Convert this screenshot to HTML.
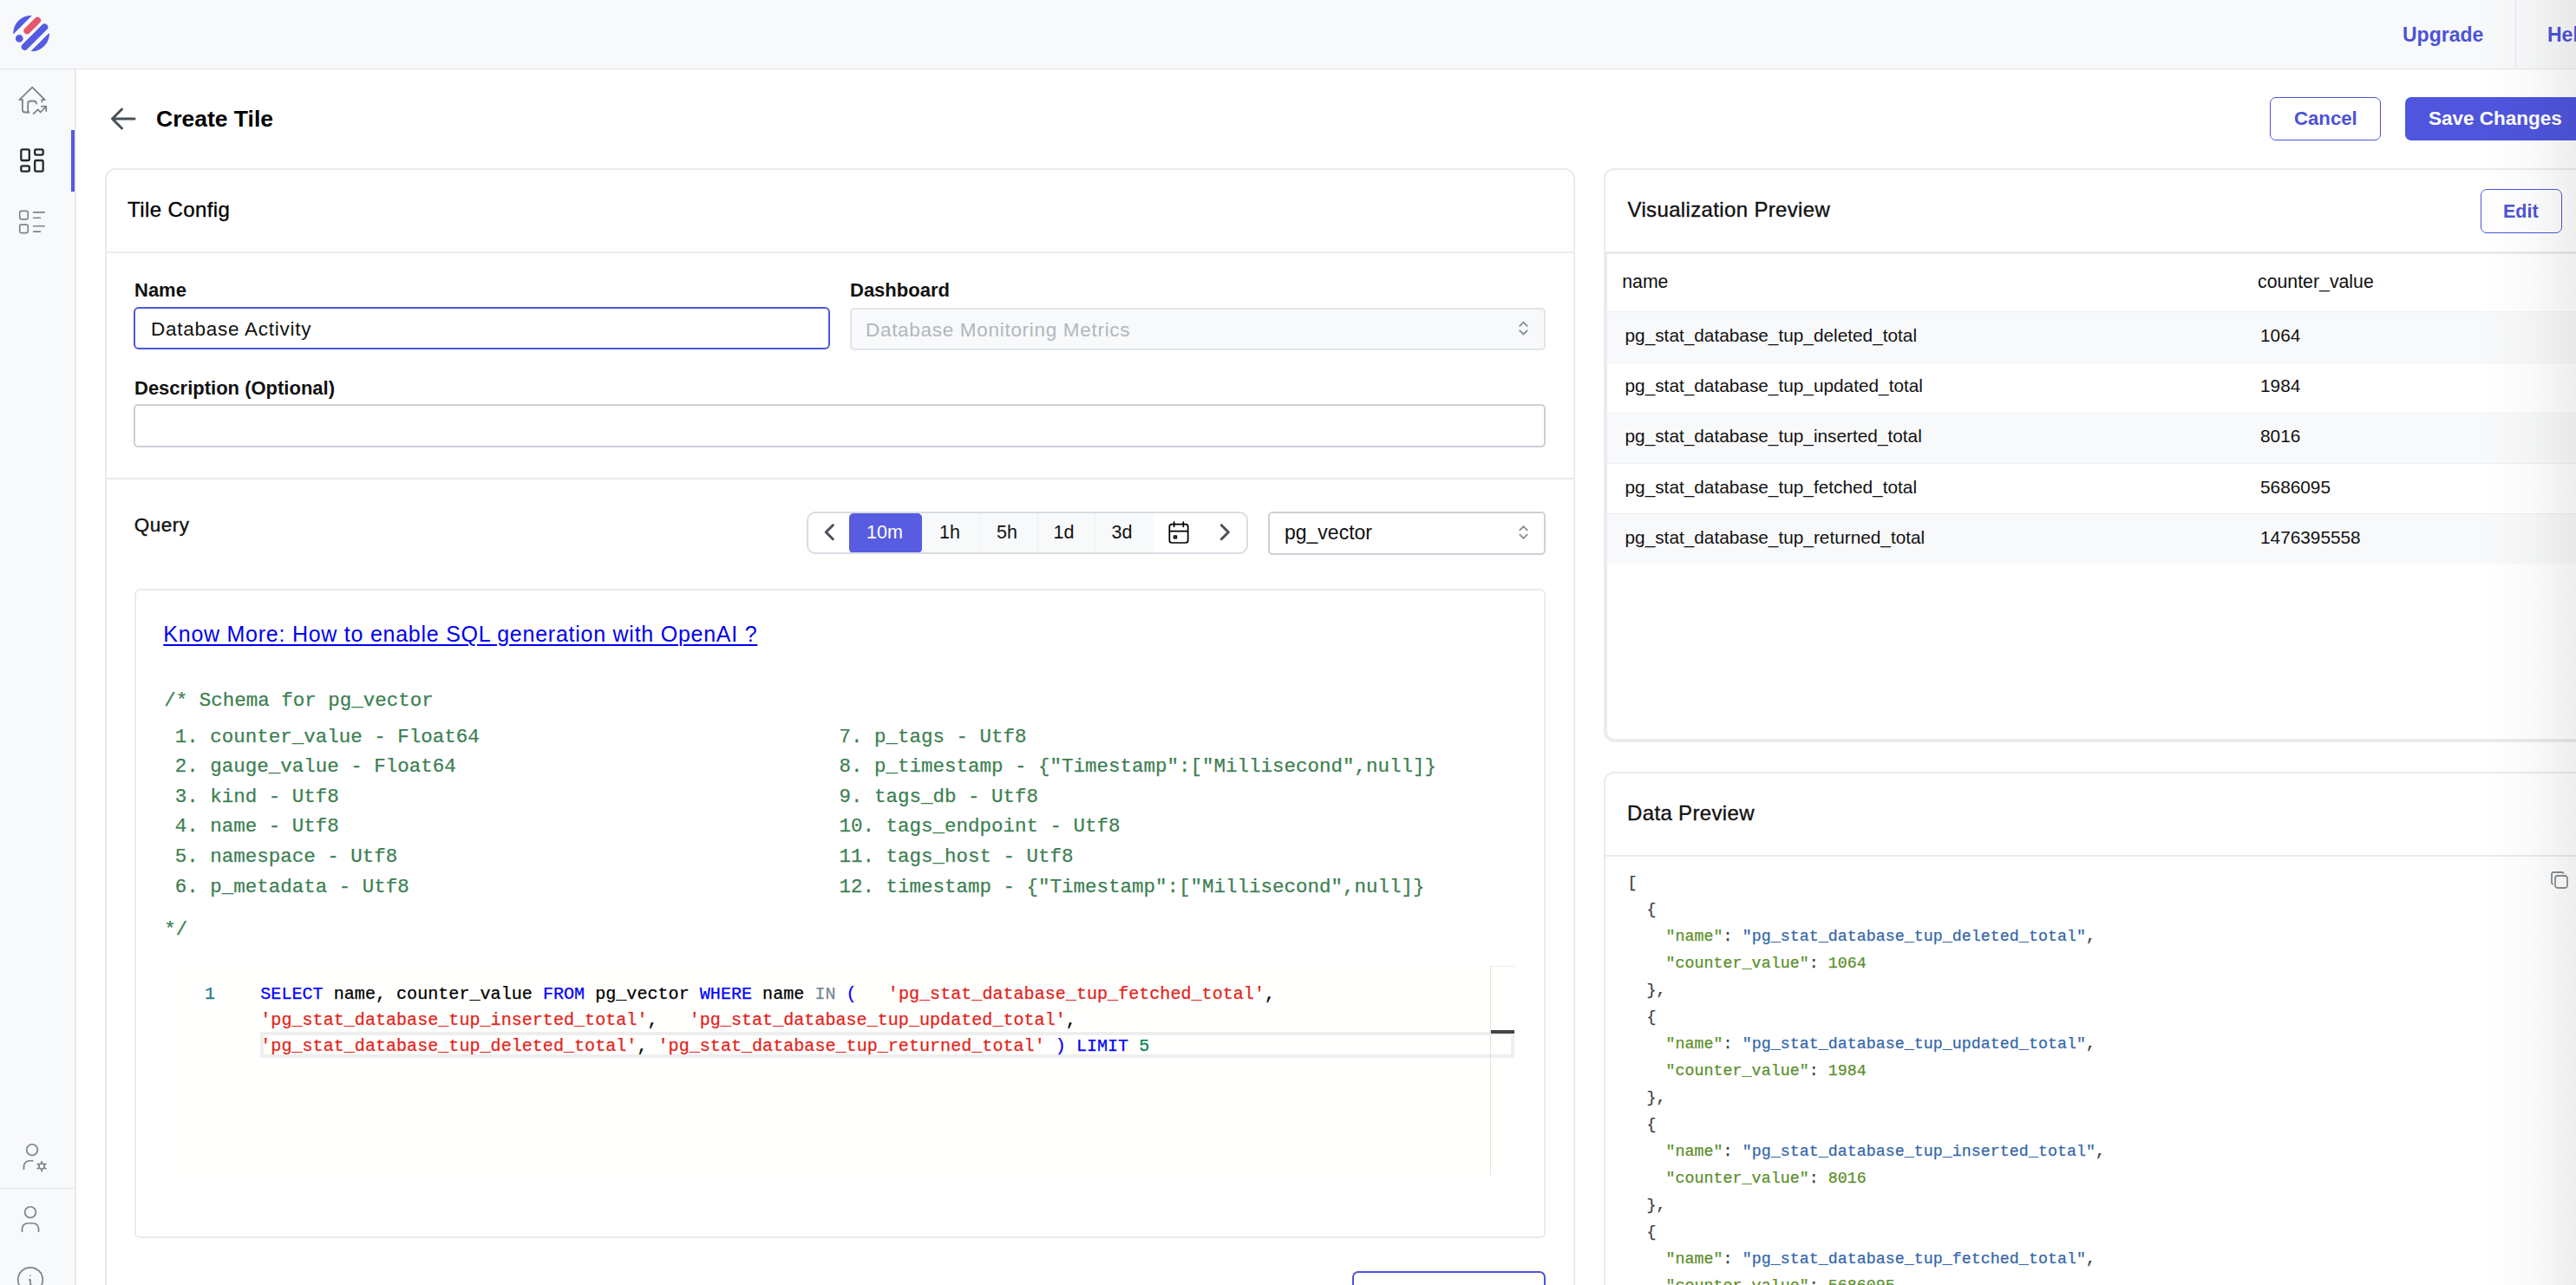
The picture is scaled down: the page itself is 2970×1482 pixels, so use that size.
<!DOCTYPE html>
<html><head><meta charset="utf-8">
<style>
*{box-sizing:border-box;margin:0;padding:0}
html,body{width:2970px;height:1482px;overflow:hidden;background:#fff;font-family:"Liberation Sans",sans-serif;color:#000}
.a{position:absolute}
.t{position:absolute;white-space:pre;line-height:1}
.m{font-family:"Liberation Mono",monospace;-webkit-text-stroke:0.25px currentColor}
.b{font-weight:700}
svg{position:absolute;overflow:visible}
#hdr{left:0;top:0;width:2970px;height:80px;background:#f8f9fa;border-bottom:1px solid #e3e6ea}
#side{left:0;top:80px;width:88px;height:1402px;background:#f8f9fa;border-right:2px solid #e8eaee}
.card{position:absolute;border:2px solid #e9ebef;border-radius:12px;background:#fff}
.hl{position:absolute;height:2px;background:#e9ebef}
.md{-webkit-text-stroke:0.35px currentColor}
.ic{fill:none;stroke-linecap:round;stroke-linejoin:round}
</style></head><body>
<!-- header -->
<div id="hdr" class="a"></div>
<svg style="left:0;top:0" width="70" height="70" viewBox="0 0 70 70">
 <g transform="translate(36.1 38.5) rotate(-45)">
  <path d="M-14.3 -14.5 A20.4 20.4 0 0 1 14.3 -14.5 Z" fill="#545be2" stroke="#545be2" stroke-width="1" stroke-linejoin="round"/>
  <path d="M-14.1 14.7 A20.4 20.4 0 0 0 14.1 14.7 Z" fill="#545be2" stroke="#545be2" stroke-width="1" stroke-linejoin="round"/>
  <line x1="-1.3" y1="-5.6" x2="15.7" y2="-5.6" stroke="#e8536d" stroke-width="7.6" stroke-linecap="round"/>
  <circle cx="-14" cy="-5.6" r="4.4" fill="#545be2"/>
  <line x1="-16.3" y1="5.7" x2="15.9" y2="5.7" stroke="#545be2" stroke-width="7.8" stroke-linecap="round"/>
 </g>
</svg>
<div class="a" style="left:2900px;top:0;width:1px;height:79px;background:#e3e6ea"></div>
<div class="t b" style="left:2770px;top:28.5px;font-size:23px;color:#4c53d6">Upgrade</div>
<div class="t b" style="left:2937px;top:28.5px;font-size:23px;color:#4c53d6">Help</div>
<!-- sidebar -->
<div id="side" class="a"></div>
<div class="a" style="left:82px;top:150px;width:4px;height:71px;background:#545be2"></div>
<div class="a" style="left:0;top:1370px;width:86px;height:1px;background:#e3e6ea"></div>
<!-- home stats icon -->
<svg style="left:0;top:0" width="87" height="1482" class="ic" stroke="#7c838b" stroke-width="1.8">
 <path d="M25.9 115.1 H22.4 L37.2 100.6 L51.8 115.1 H48.3 V117.4"/>
 <path d="M25.9 115.1 V126.5 Q25.9 129.5 29 129.5 H33.6"/>
 <path d="M32.2 129.5 V119.5 Q32.2 116.5 35.3 116.5 H38.8 Q41.6 116.5 42.1 119.5"/>
 <path d="M38.6 131.2 L43.7 126.3 L46.7 129.5 L53.2 122.7 M47.9 122.7 H53.2 V128"/>
</svg>
<!-- dashboard icon -->
<svg style="left:18.1px;top:165.8px" width="38" height="38" viewBox="0 0 24 24" class="ic" stroke="#25282c" stroke-width="1.45">
 <path d="M5 4h4a1 1 0 0 1 1 1v6a1 1 0 0 1-1 1H5a1 1 0 0 1-1-1V5a1 1 0 0 1 1-1M5 16h4a1 1 0 0 1 1 1v2a1 1 0 0 1-1 1H5a1 1 0 0 1-1-1v-2a1 1 0 0 1 1-1M15 12h4a1 1 0 0 1 1 1v6a1 1 0 0 1-1 1h-4a1 1 0 0 1-1-1v-6a1 1 0 0 1 1-1M15 4h4a1 1 0 0 1 1 1v2a1 1 0 0 1-1 1h-4a1 1 0 0 1-1-1V5a1 1 0 0 1 1-1"/>
</svg>
<!-- list icon -->
<svg style="left:17.84px;top:236.66px" width="38" height="38" viewBox="0 0 24 24" class="ic" stroke="#7c838b" stroke-width="1.05">
 <path d="M13 5h8M13 9h5M13 15h8M13 19h5M4 4h4a1 1 0 0 1 1 1v4a1 1 0 0 1-1 1h-4a1 1 0 0 1-1-1v-4a1 1 0 0 1 1-1zM4 14h4a1 1 0 0 1 1 1v4a1 1 0 0 1-1 1h-4a1 1 0 0 1-1-1v-4a1 1 0 0 1 1-1z"/>
</svg>
<!-- user cog -->
<svg style="left:18.17px;top:1315.1px" width="38" height="38" viewBox="0 0 24 24" class="ic" stroke="#7c838b" stroke-width="1.1">
 <path d="M6 21v-2a4 4 0 0 1 4-4h2.5M8 7a4 4 0 1 0 8 0a4 4 0 0 0-8 0M17 19a2 2 0 1 0 4 0a2 2 0 1 0-4 0M19 15.5v1.5M19 21v1.5M22.03 17.25l-1.3.75M17.27 20l-1.3.75M15.97 17.25l1.3.75M20.73 20l1.3.75"/>
</svg>
<!-- user -->
<svg style="left:16.17px;top:1386.8px" width="38" height="38" viewBox="0 0 24 24" class="ic" stroke="#7c838b" stroke-width="1.1">
 <path d="M8 7a4 4 0 1 0 8 0a4 4 0 0 0-8 0M6 21v-2a4 4 0 0 1 4-4h4a4 4 0 0 1 4 4v2"/>
</svg>
<!-- info -->
<svg style="left:16.17px;top:1457.2px" width="38" height="38" viewBox="0 0 24 24" class="ic" stroke="#7c838b" stroke-width="1.1">
 <path d="M3 12a9 9 0 1 0 18 0a9 9 0 0 0-18 0M12 9h.01M11 12h1v4h1"/>
</svg>

<!-- title -->
<svg style="left:0;top:0" width="200" height="200" class="ic" stroke="#495057" stroke-width="3">
 <path d="M129.5 137 H155 M129.5 137 L140.5 126 M129.5 137 L140.5 148"/>
</svg>
<div class="t b" style="left:180px;top:123.7px;font-size:26.5px">Create Tile</div>
<div class="a" style="left:2617px;top:112px;width:128px;height:50px;border:1.5px solid #4c53d6;border-radius:7px"></div>
<div class="t b" style="left:2645px;top:126px;font-size:22.2px;color:#4c53d6">Cancel</div>
<div class="a" style="left:2773px;top:112px;width:260px;height:50px;background:#4f55dd;border-radius:7px"></div>
<div class="t b" style="left:2800px;top:126px;font-size:22.5px;color:#fff">Save Changes</div>

<!-- left card -->
<div class="card" style="left:121px;top:194px;width:1695px;height:1400px"></div>
<div class="t md" style="left:147px;top:229.5px;font-size:24px;letter-spacing:0.4px">Tile Config</div>
<div class="hl" style="left:123px;top:290px;width:1691px"></div>

<div class="t b" style="left:155px;top:324.4px;font-size:22px;color:#111">Name</div>
<div class="a" style="left:154px;top:354px;width:803px;height:49px;border:2px solid #4c57dc;border-radius:6px"></div>
<div class="t" style="left:174px;top:368.7px;font-size:22.5px;letter-spacing:0.74px;color:#111">Database Activity</div>

<div class="t b" style="left:980px;top:324px;font-size:22px;color:#111">Dashboard</div>
<div class="a" style="left:979.5px;top:354.5px;width:802px;height:49px;background:#f8f9fa;border:2px solid #e1e4e8;border-radius:5px"></div>
<div class="t" style="left:998px;top:370px;font-size:22.5px;letter-spacing:0.7px;color:#b1b7bd">Database Monitoring Metrics</div>
<svg style="left:0;top:0" width="1" height="1" class="ic" stroke="#868e96" stroke-width="1.9">
 <path d="M1752.3 375.9 L1756.5 371.7 L1760.7 375.9 M1752.3 381.3 L1756.5 385.5 L1760.7 381.3"/>
</svg>

<div class="t b" style="left:155px;top:437.4px;font-size:22px;color:#111">Description (Optional)</div>
<div class="a" style="left:154px;top:466px;width:1628px;height:50px;border:2px solid #cbd0d6;border-radius:5px"></div>
<div class="hl" style="left:123px;top:551px;width:1691px"></div>
<!-- query section -->
<div class="t md" style="left:154.7px;top:595px;font-size:22.5px;letter-spacing:0.5px;color:#111">Query</div>
<div class="a" style="left:930px;top:590px;width:508.5px;height:49px;border:2px solid #d9dde2;border-radius:10px;background:#fff;overflow:hidden">
 <div class="a" style="left:47px;top:0;width:351px;height:46px;background:#f8f9fa"></div>
 <div class="a" style="left:47px;top:0;width:84px;height:46px;background:#585ce0;border-radius:5px"></div>
 <div class="a" style="left:196.5px;top:0;width:1px;height:46px;background:#eef0f3"></div>
 <div class="a" style="left:263.5px;top:0;width:1px;height:46px;background:#eef0f3"></div>
 <div class="a" style="left:329.5px;top:0;width:1px;height:46px;background:#eef0f3"></div>
</div>
<div class="t" style="left:999px;top:604px;font-size:21.5px;color:#fff">10m</div>
<div class="t" style="left:1083px;top:604px;font-size:21.5px;color:#111">1h</div>
<div class="t" style="left:1149px;top:604px;font-size:21.5px;color:#111">5h</div>
<div class="t" style="left:1214.5px;top:604px;font-size:21.5px;color:#111">1d</div>
<div class="t" style="left:1281.5px;top:604px;font-size:21.5px;color:#111">3d</div>
<svg style="left:1342.8px;top:597.9px" width="32" height="32" viewBox="0 0 24 24" class="ic" stroke="#000" stroke-width="1.3">
 <path d="M4 7a2 2 0 0 1 2-2h12a2 2 0 0 1 2 2v12a2 2 0 0 1-2 2h-12a2 2 0 0 1-2-2zM16 3v4M8 3v4M4 11h16M8 15h2v2h-2z"/>
</svg>
<svg style="left:0;top:0" width="1" height="1" class="ic" stroke="#495057" stroke-width="3">
 <path d="M1408.3 605.7 L1416.3 613.7 L1408.3 621.7 M960.3 605.7 L952.3 613.7 L960.3 621.7"/>
</svg>
<div class="a" style="left:1461.5px;top:589.5px;width:320.5px;height:50px;border:2px solid #ccd1d8;border-radius:5px"></div>
<div class="t" style="left:1481px;top:603px;font-size:23px;color:#111">pg_vector</div>
<svg style="left:0;top:0" width="1" height="1" class="ic" stroke="#868e96" stroke-width="1.9">
 <path d="M1752.3 611.3 L1756.5 607.1 L1760.7 611.3 M1752.3 616.7 L1756.5 620.9 L1760.7 616.7"/>
</svg>

<div class="a" style="left:154.5px;top:678.5px;width:1627px;height:749px;border:2px solid #e9ebef;border-radius:6px"></div>
<div class="t" style="left:188.3px;top:718.5px;font-size:25px;letter-spacing:0.75px;color:#0000ee;text-decoration:underline;text-decoration-thickness:2px;text-underline-offset:3px">Know More: How to enable SQL generation with OpenAI ?</div>
<div class="m" style="position:absolute;left:189.3px;top:797px;font-size:22.5px;line-height:1;white-space:pre;color:#3d7f52">/* Schema for pg_vector</div>
<div class="m" style="position:absolute;left:188.3px;top:841px;font-size:22.5px;line-height:34.6px;white-space:pre;color:#3d7f52;margin-top:-8.3px"> 1. counter_value - Float64
 2. gauge_value - Float64
 3. kind - Utf8
 4. name - Utf8
 5. namespace - Utf8
 6. p_metadata - Utf8</div>
<div class="m" style="position:absolute;left:967.5px;top:841px;font-size:22.5px;line-height:34.6px;white-space:pre;color:#3d7f52;margin-top:-8.3px">7. p_tags - Utf8
8. p_timestamp - {"Timestamp":["Millisecond",null]}
9. tags_db - Utf8
10. tags_endpoint - Utf8
11. tags_host - Utf8
12. timestamp - {"Timestamp":["Millisecond",null]}</div>
<div class="m" style="position:absolute;left:189.3px;top:1061.3px;font-size:22.5px;line-height:1;white-space:pre;color:#3d7f52">*/</div>

<div class="a" style="left:188px;top:1112px;width:1558px;height:245px;background:#fffffd"></div>
<div class="a" style="left:300px;top:1190px;width:1446px;height:30px;border:4px solid #eeeeee"></div>
<div class="a" style="left:1718px;top:1114px;width:1px;height:241px;background:#e2e2e2"></div>
<div class="a" style="left:1718px;top:1114px;width:28px;height:1px;background:#eeeeee"></div>
<div class="a" style="left:1719px;top:1187.5px;width:27px;height:4.5px;background:#444"></div>
<div class="m" style="position:absolute;left:236px;top:1136.8px;font-size:20px;line-height:1;white-space:pre;color:#237893">1</div>
<div class="m" style="position:absolute;left:300.3px;top:1131.8px;font-size:20.1px;line-height:30px;white-space:pre;color:#000"><span style="color:#0000ff">SELECT</span> name, counter_value <span style="color:#0000ff">FROM</span> pg_vector <span style="color:#0000ff">WHERE</span> name <span style="color:#778899">IN</span> <span style="color:#0000ff">(</span>   <span style="color:#e3241b">'pg_stat_database_tup_fetched_total'</span>,
<span style="color:#e3241b">'pg_stat_database_tup_inserted_total'</span>,   <span style="color:#e3241b">'pg_stat_database_tup_updated_total'</span>,
<span style="color:#e3241b">'pg_stat_database_tup_deleted_total'</span>, <span style="color:#e3241b">'pg_stat_database_tup_returned_total'</span> <span style="color:#0000ff">)</span> <span style="color:#0000ff">LIMIT</span> <span style="color:#098658">5</span></div>
<div class="a" style="left:1558.5px;top:1466px;width:223px;height:60px;border:2px solid #4c53d6;border-radius:7px"></div>

<!-- right: visualization -->
<div class="card" style="left:1849px;top:194px;width:1200px;height:662px"></div>
<div class="t md" style="left:1876.5px;top:229.8px;font-size:24px;letter-spacing:0.35px;color:#111">Visualization Preview</div>
<div class="a" style="left:2860px;top:218px;width:94px;height:51px;border:1.5px solid #4c53d6;border-radius:7px"></div>
<div class="t b" style="left:2886px;top:233.8px;font-size:21.5px;color:#4c53d6">Edit</div>
<div class="a" style="left:1851px;top:290px;width:1200px;height:564px;border-top:3.5px solid #e9ebef;border-left:2px solid #e9ebef;border-bottom:2px solid #e9ebef;border-radius:0 0 0 10px"></div>
<div class="t" style="left:1870.2px;top:315px;font-size:21.3px;color:#111">name</div>
<div class="t" style="left:2603px;top:315px;font-size:21.3px;color:#111">counter_value</div>
<div class="a" style="left:1853px;top:359.4px;width:1200px;height:58.2px;background:#f8f9fa;border-top:1px solid #eef0f2"></div>
<div class="t" style="left:1873.5px;top:377.0px;font-size:20.8px;color:#111">pg_stat_database_tup_deleted_total</div>
<div class="t" style="left:2606px;top:377.0px;font-size:20.8px;color:#111">1064</div>
<div class="a" style="left:1853px;top:417.6px;width:1200px;height:58.2px;background:#fff;border-top:1px solid #eef0f2"></div>
<div class="t" style="left:1873.5px;top:435.2px;font-size:20.8px;color:#111">pg_stat_database_tup_updated_total</div>
<div class="t" style="left:2606px;top:435.2px;font-size:20.8px;color:#111">1984</div>
<div class="a" style="left:1853px;top:475.8px;width:1200px;height:58.2px;background:#f8f9fa;border-top:1px solid #eef0f2"></div>
<div class="t" style="left:1873.5px;top:493.4px;font-size:20.8px;color:#111">pg_stat_database_tup_inserted_total</div>
<div class="t" style="left:2606px;top:493.4px;font-size:20.8px;color:#111">8016</div>
<div class="a" style="left:1853px;top:534.0px;width:1200px;height:58.2px;background:#fff;border-top:1px solid #eef0f2"></div>
<div class="t" style="left:1873.5px;top:551.6px;font-size:20.8px;color:#111">pg_stat_database_tup_fetched_total</div>
<div class="t" style="left:2606px;top:551.6px;font-size:20.8px;color:#111">5686095</div>
<div class="a" style="left:1853px;top:592.2px;width:1200px;height:58.2px;background:#f8f9fa;border-top:1px solid #eef0f2"></div>
<div class="t" style="left:1873.5px;top:609.8px;font-size:20.8px;color:#111">pg_stat_database_tup_returned_total</div>
<div class="t" style="left:2606px;top:609.8px;font-size:20.8px;color:#111">1476395558</div>
<!-- data preview -->
<div class="card" style="left:1849px;top:890px;width:1200px;height:700px"></div>
<div class="t md" style="left:1876px;top:926.3px;font-size:24px;letter-spacing:0.35px;color:#111">Data Preview</div>
<div class="a" style="left:1851px;top:985.5px;width:1200px;height:2px;background:#e9ebef"></div>
<svg style="left:2939px;top:1003px" width="24" height="24" viewBox="0 0 24 24" class="ic" stroke="#868e96" stroke-width="1.8">
 <path d="M7 9.67a2.67 2.67 0 0 1 2.67-2.67h8.67a2.67 2.67 0 0 1 2.67 2.67v8.67a2.67 2.67 0 0 1-2.67 2.67h-8.67a2.67 2.67 0 0 1-2.67-2.67zM4.01 16.74a2 2 0 0 1-1.01-1.74v-10c0-1.1.9-2 2-2h10c.75 0 1.16.39 1.5 1"/>
</svg>
<div class="m" style="position:absolute;left:1876.5px;top:1002.5px;font-size:18.35px;line-height:31px;white-space:pre;color:#3a3f44">[
  {
    <span style="color:#5c8f2c">"name"</span>: <span style="color:#3567a9">"pg_stat_database_tup_deleted_total"</span>,
    <span style="color:#5c8f2c">"counter_value"</span>: <span style="color:#5c8f2c">1064</span>
  },
  {
    <span style="color:#5c8f2c">"name"</span>: <span style="color:#3567a9">"pg_stat_database_tup_updated_total"</span>,
    <span style="color:#5c8f2c">"counter_value"</span>: <span style="color:#5c8f2c">1984</span>
  },
  {
    <span style="color:#5c8f2c">"name"</span>: <span style="color:#3567a9">"pg_stat_database_tup_inserted_total"</span>,
    <span style="color:#5c8f2c">"counter_value"</span>: <span style="color:#5c8f2c">8016</span>
  },
  {
    <span style="color:#5c8f2c">"name"</span>: <span style="color:#3567a9">"pg_stat_database_tup_fetched_total"</span>,
    <span style="color:#5c8f2c">"counter_value"</span>: <span style="color:#5c8f2c">5686095</span></div>

<div class="a" style="left:2860px;top:0;width:110px;height:1482px;background:linear-gradient(to right,rgba(0,0,0,0),rgba(0,0,0,0.02) 50%,rgba(0,0,0,0.065))"></div>
</body></html>
